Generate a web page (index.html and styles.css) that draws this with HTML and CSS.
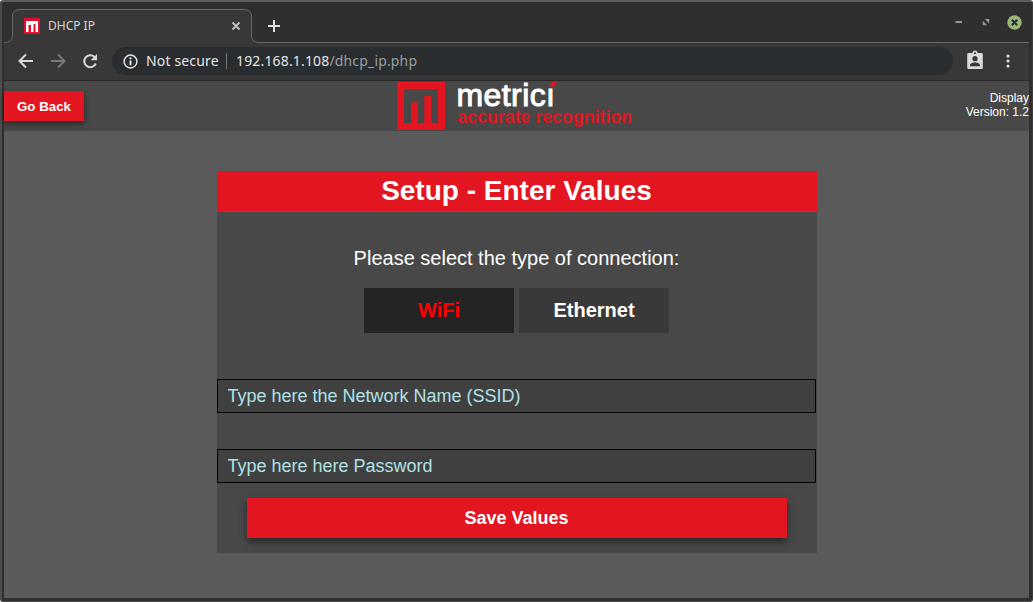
FILE: index.html
```html
<!DOCTYPE html>
<html lang="en">
<head>
<meta charset="utf-8">
<title>DHCP IP</title>
<link rel="stylesheet" href="styles.css">
</head>
<body>
<div class="window">
  <div class="tabstrip">
    <svg class="tab-shape" width="1025" height="38" viewBox="0 0 1025 38">
      <path d="M0 38.500C5 38.500 8.500 36 8.500 31V12C8.500 8 11.500 5.500 15.500 5.500H240C244.500 5.500 247.500 8 247.500 12V31C247.500 36 250.500 38.500 255 38.500V40H0Z" fill="#383838"/>
      <path d="M0 38.500C5 38.500 8.500 36 8.500 31V12C8.500 8 11.500 5.500 15.500 5.500H240C244.500 5.500 247.500 8 247.500 12V31C247.500 36 250.500 38.500 255 38.500H1025" fill="none" stroke="#6a6a6a"/>
    </svg>
    <div class="tab">
      <svg class="favicon" width="16" height="16" viewBox="0 0 16 16"><path d="M0 0H16V16H0Z" fill="#e0102c"/><path d="M2 3H14V14H11.500V6H9.500V14H7V7H4.500V14H2Z" fill="#fff"/></svg>
      <span class="tab-title">DHCP IP</span>
      <svg width="10" height="10" viewBox="0 0 10 10" stroke="#c2c2c2" stroke-width="1.800"><path d="M1.500 1.500L8.500 8.500M8.500 1.500L1.500 8.500"/></svg>
    </div>
    <svg class="new-tab" width="12" height="12" viewBox="0 0 12 12" stroke="#e2dfe2" stroke-width="2"><path d="M6 0V12M0 6H12"/></svg>
    <div class="controls">
      <svg width="8" height="16" viewBox="0 0 8 16"><path d="M1.500 7H8V9H1.500Z" fill="#98989b"/></svg>
      <svg width="8" height="8" viewBox="0 0 8 8" fill="#98989b"><path d="M2.800 1H7.200V5.400ZM.8 2.800L5.200 7.200H.8Z"/></svg>
      <svg width="15" height="15" viewBox="0 0 15 15"><circle cx="7.500" cy="7.500" r="7.200" fill="#9ab87c"/><path d="M4.800 4.800L10.200 10.200M10.200 4.800L4.800 10.200" stroke="#303030" stroke-width="2.200"/></svg>
    </div>
  </div>
  <div class="toolbar">
    <svg class="nav" width="16" height="16" viewBox="0 0 16 16" fill="none" stroke="#d9d9d9" stroke-width="2"><path d="M15 8H2M8 1.500L1.500 8L8 14.500"/></svg>
    <svg class="nav" width="16" height="16" viewBox="0 0 16 16" fill="none" stroke="#787878" stroke-width="2"><path d="M1 8H14M8 1.500L14.500 8L8 14.500"/></svg>
    <svg class="nav" width="16" height="16" viewBox="0 0 16 16"><path d="M13.800 10.500A6 6 0 1 1 12.300 3.700L13.500 5" fill="none" stroke="#d9d9d9" stroke-width="2"/><path d="M15 1V7.300H8.700Z" fill="#d9d9d9"/></svg>
    <div class="address">
      <svg width="15" height="15" viewBox="0 0 15 15"><circle cx="7.500" cy="7.500" r="6.400" fill="none" stroke="#e4e4e4" stroke-width="1.500"/><path d="M6.600 3.500H8.400V5.200H6.600ZM6.600 6.500H8.400V11.300H6.600Z" fill="#fff"/></svg>
      <span class="security">Not secure</span>
      <span class="divider"></span>
      <span class="url">192.168.1.108<span class="path">/dhcp_ip.php</span></span>
    </div>
    <svg class="profile" width="16" height="20" viewBox="0 0 16 20"><path d="M1.500 3H5.500A2.500 2.500 0 0 1 10.500 3H14.500Q15.800 3 15.800 4.300V17.700Q15.800 19 14.500 19H1.500Q.2 19 .2 17.700V4.300Q.2 3 1.500 3Z" fill="#dadada"/><circle cx="8" cy="3.200" r="1" fill="#383838"/><circle cx="8" cy="8.700" r="2.600" fill="#383838"/><path d="M3 16.200V15C3 13.300 5.800 12.400 8 12.400S13 13.300 13 15V16.200Z" fill="#383838"/></svg>
    <svg class="menu" width="4" height="14" viewBox="0 0 4 14" fill="#dedede"><circle cx="2" cy="2" r="1.600"/><circle cx="2" cy="7" r="1.600"/><circle cx="2" cy="12" r="1.600"/></svg>
  </div>
  <div class="page">
    <header class="header">
      <button class="back">Go Back</button>
      <svg class="logo" width="240" height="50" viewBox="0 0 240 50">
        <path fill-rule="evenodd" d="M.3 1H48V49H.3ZM7 8V42H41V8Z" fill="#e21520"/>
        <path d="M14 21.300H21V42H14ZM27.300 15H34.300V42H27.300Z" fill="#e21520"/>
        <text class="brand" x="59.500" y="24.500" textLength="98.500">metricı</text>
        <path d="M154.500 1H160L156.300 5.500H152.500Z" fill="#e21520"/>
        <text class="tagline" x="60.500" y="42" textLength="174.500">accurate recognition</text>
      </svg>
      <div class="version">Display<br>Version: 1.2</div>
    </header>
    <main class="card">
      <h1 class="title">Setup - Enter Values</h1>
      <p class="prompt">Please select the type of connection:</p>
      <div class="choices">
        <button class="choice selected">WiFi</button>
        <button class="choice">Ethernet</button>
      </div>
      <input class="field" type="text" placeholder="Type here the Network Name (SSID)">
      <input class="field" type="text" placeholder="Type here here Password">
      <button class="save">Save Values</button>
    </main>
  </div>
</div>
</body>
</html>
```
FILE: styles.css
```css
* { box-sizing: border-box; }
body {
  margin: 0;
  background: #fff;
  font-family: "Liberation Sans", Arial, sans-serif;
  overflow: hidden;
}
button { border: 0; padding: 0; font-family: inherit; font-weight: bold; color: #fff; }
svg { display: block; flex: none; }
.window {
  width: 1033px;
  height: 602px;
  display: flex;
  flex-direction: column;
  background: #2f2f2f;
  border: solid #4c4c4c;
  border-width: 2px 1px 1px 2px;
  border-top-color: #5d5d5d;
  border-right-color: #3c3c3c;
  border-radius: 3px;
  padding: 2px 3px 3px 2px;
}
.tabstrip { position: relative; height: 39px; display: flex; align-items: flex-start; }
.tab-shape { position: absolute; left: 0; top: 0; overflow: visible; }
.tab {
  position: relative;
  width: 240px;
  padding: 14px 3px 0 20px;
  display: flex;
  align-items: center;
}
.tab-title { flex: 1; margin-left: 8px; font: 12px/16px "Noto Sans", sans-serif; color: #d7d2ce; }
.new-tab { margin: 16px 0 0 24px; }
.controls { display: flex; align-items: center; margin: 10px 7px 0 auto; gap: 20px; }
.controls svg:last-child { margin-left: -3px; }
.toolbar {
  height: 38px;
  background: #383838;
  border-bottom: 1px solid #292929;
  display: flex;
  align-items: center;
  padding: 0 0 1px 14px;
}
.nav { margin-right: 16px; }
.address {
  width: 841px;
  height: 28px;
  margin-left: -2px;
  padding-left: 11px;
  border-radius: 14px;
  background: #292d30;
  display: flex;
  align-items: center;
  font: 14px/20px "Noto Sans", sans-serif;
  letter-spacing: .16px;
  color: #e6e6e6;
  white-space: nowrap;
}
.security { width: 73px; margin-left: 8px; }
.divider { width: 1px; height: 16px; margin: 0 9px 0 7px; background: #777; }
.path { color: #999ea0; }
.profile { margin: -2px 0 0 14px; }
.menu { margin-left: 23px; }
.page { flex: 1; background: #5a5a5a; }
.header {
  height: 50px;
  background: #484848;
  display: grid;
  grid-template-columns: 393px 240px 1fr;
}
.logo { overflow: visible; }
.back {
  width: 80px;
  height: 30px;
  margin-top: 10px;
  background: #e21520;
  font-size: 13.333px;
  box-shadow: 0 3px 6px rgba(0, 0, 0, .45);
}
.brand { font-size: 32px; fill: #fff; stroke: #fff; stroke-width: 1; }
.tagline { font-size: 17.5px; font-weight: bold; fill: #e21520; }
.version { padding-top: 10px; text-align: right; font-size: 12px; line-height: 14px; color: #fff; }
.card {
  width: 600px;
  height: 382px;
  margin: 40px 0 0 213px;
  background: #484848;
  display: flex;
  flex-direction: column;
}
.title {
  margin: 0;
  height: 41px;
  padding-right: 1px;
  background: #e21520;
  border-bottom: 1px solid #80484a;
  font-size: 28px;
  line-height: 39px;
  text-align: center;
  color: #fff;
}
.prompt { margin: 35px 0 18px; padding-right: 1px; font-size: 20px; line-height: 23px; text-align: center; color: #fff; }
.choices { display: flex; gap: 5px; margin: 0 0 46px 147px; }
.choice { width: 150px; height: 45px; background: #393939; font-size: 20px; }
.selected { background: #242424; color: #f00; }
.field {
  width: 599px;
  height: 34px;
  margin: 0 0 36px;
  padding: 0 9.5px;
  border: 1px solid #000;
  border-radius: 0;
  background: #404040;
  font: 18px "Liberation Sans", Arial, sans-serif;
}
.field + .field { margin-bottom: 15px; }
.field::placeholder { color: #b0e0e6; opacity: 1; }
.save {
  width: 540px;
  height: 40px;
  margin-left: 30px;
  padding-right: 1px;
  background: #e21520;
  font-size: 18px;
  box-shadow: 0 4px 8px rgba(0, 0, 0, .45);
}
```
